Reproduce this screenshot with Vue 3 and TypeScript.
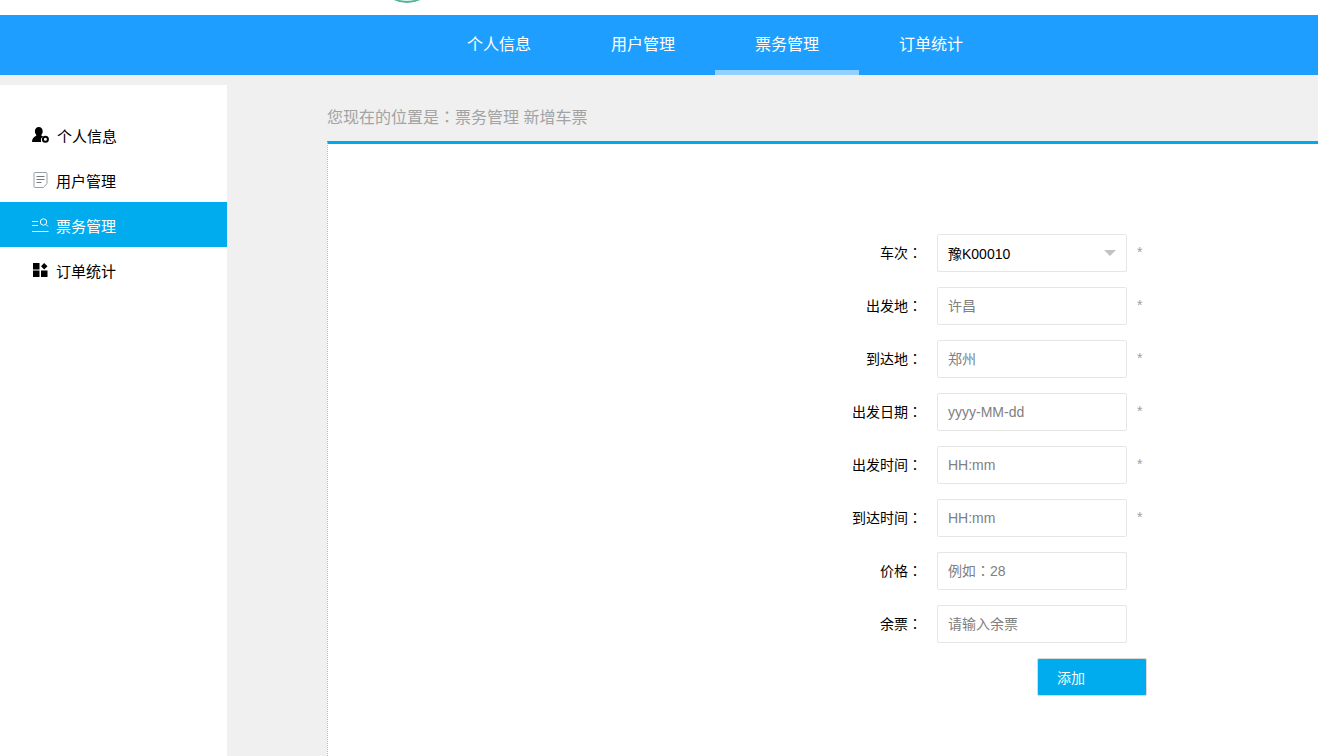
<script setup lang="ts">
interface Field { label: string; placeholder: string; required: boolean; centred?: boolean }
const navItems = ['个人信息', '用户管理', '票务管理', '订单统计']
const fields: Field[] = [
  { label: '出发地', placeholder: '许昌', required: true },
  { label: '到达地', placeholder: '郑州', required: true },
  { label: '出发日期', placeholder: 'yyyy-MM-dd', required: true },
  { label: '出发时间', placeholder: 'HH:mm', required: true },
  { label: '到达时间', placeholder: 'HH:mm', required: true },
  { label: '价格', placeholder: '例如：28', required: false, centred: true },
  { label: '余票', placeholder: '请输入余票', required: false },
]
</script>

<template>
  <div class="page">
    <header class="top">
      <span class="logo"></span>
    </header>
    <nav class="nav">
      <a v-for="(n, i) in navItems" :key="n" class="nav-item" :class="{ active: i === 2 }">{{ n }}</a>
    </nav>
    <div class="body">
      <aside class="side">
        <a class="side-item first">
          <svg class="ico" width="17" height="16" viewBox="0 0 17 16">
            <path fill="#000" d="M6.800 0c2.300 0 3.900 1.900 3.900 4.300 0 1.300-.5 2.600-1.300 3.400v1c.6.200 1.200.5 1.700.9a4.600 4.600 0 0 0-1.900 5.400V15H0c0-3.200 1.800-5.200 4.200-6.300v-1C3.400 6.900 2.900 5.600 2.900 4.300 2.900 1.900 4.500 0 6.800 0Z"/>
            <circle cx="13.400" cy="12.300" r="2.500" fill="none" stroke="#000" stroke-width="2"/>
          </svg>
          <span>个人信息</span>
        </a>
        <a class="side-item">
          <svg class="ico" width="15" height="16" viewBox="0 0 15 16">
            <path fill="none" stroke="#9aa0a8" stroke-width="1" d="M2 .5h11a1 1 0 0 1 1 1V11.500L10.500 15.500H2a1 1 0 0 1-1-1V1.500a1 1 0 0 1 1-1Z"/>
            <path fill="none" stroke="#777" d="M3.500 4.500h8M3.500 7.500h8M3.500 10.500h5"/>
          </svg>
          <span>用户管理</span>
        </a>
        <a class="side-item active">
          <svg class="ico" width="17" height="14" viewBox="0 0 17 14">
            <path fill="none" stroke="#fff" d="M0 3.500h6M0 7.500h6M0 13.500h16.500"/>
            <circle cx="11.500" cy="4" r="3.200" fill="none" stroke="#fff"/>
            <path stroke="#fff" d="m14 6.500 2 2"/>
          </svg>
          <span>票务管理</span>
        </a>
        <a class="side-item">
          <svg class="ico" width="15" height="14" viewBox="0 0 15 14">
            <path fill="#000" d="M0 0h6.500v6.500H0zM0 7.500h6.500V14H0zM8 7.500h6.500V14H8z"/>
            <path fill="#000" d="m11.200 0 3.300 3.200-3.300 3.300L8 3.200z"/>
          </svg>
          <span>订单统计</span>
        </a>
      </aside>
      <main class="main">
        <div class="crumb">您现在的位置是<span class="colon">：</span>票务管理 新增车票</div>
        <section class="panel">
          <form class="form" @submit.prevent>
            <div class="row">
              <label class="label">车次<span class="colon">：</span></label>
              <div class="select">
                <span>豫K00010</span>
                <i class="caret"></i>
              </div>
              <span class="star">*</span>
            </div>
            <div v-for="f in fields" :key="f.label" class="row">
              <label class="label">{{ f.label }}<span class="colon">：</span></label>
              <input class="input" :class="{ centred: f.centred }" type="text" :placeholder="f.placeholder" />
              <span v-if="f.required" class="star">*</span>
            </div>
            <div class="actions">
              <button class="btn" type="submit">添加</button>
            </div>
          </form>
        </section>
      </main>
    </div>
  </div>
</template>

<style scoped>
.page {
  height: 756px;
  display: flex;
  flex-direction: column;
  overflow: hidden;
  background: #f0f0f0;
  font-family: "Liberation Sans", "Noto Sans CJK SC", sans-serif;
  font-size: 14px;
  color: #000;
}
.colon {
  font-family: "Liberation Sans", "Noto Sans CJK TC", sans-serif;
}
.top {
  height: 15px;
  background: #fff;
  position: relative;
  overflow: hidden;
}
.logo {
  position: absolute;
  left: 377px;
  top: -57px;
  width: 60px;
  height: 60px;
  box-sizing: border-box;
  border-radius: 50%;
  border: 2px solid #54b59a;
  background: #dff1ec;
}
.nav {
  height: 60px;
  background: #1e9fff;
  display: flex;
  padding-left: 427px;
}
.nav-item {
  width: 144px;
  height: 60px;
  line-height: 60px;
  text-align: center;
  color: #fff;
  font-size: 16px;
  box-sizing: border-box;
}
.nav-item.active {
  border-bottom: 5px solid #92d0ff;
}
.body {
  flex: 1;
  display: flex;
  min-height: 0;
}
.side {
  width: 227px;
  margin-top: 10px;
  padding-top: 27px;
  background: #fff;
  box-sizing: border-box;
}
.side-item {
  height: 45px;
  display: flex;
  align-items: center;
  padding-left: 32px;
  font-size: 15px;
}
.side-item span {
  padding-top: 2px;
}
.side-item .ico {
  flex: none;
  width: 17px;
  margin-right: 7px;
}
.side-item.first .ico { margin-right: 8px; }
.side-item.active {
  background: #00acee;
  color: #fff;
}
.main {
  flex: 1;
  margin-left: 100px;
  display: flex;
  flex-direction: column;
  min-width: 0;
}
.crumb {
  height: 66px;
  line-height: 86px;
  font-size: 16px;
  color: #a3a3a3;
  flex: none;
}
.panel {
  flex: 1;
  background: #fff;
  border-top: 3px solid #00a9ec;
  border-left: 1px dotted #b5b5b5;
  padding: 90px 0 0 499px;
}
.form {
  display: flex;
  flex-direction: column;
  gap: 15px;
}
.row {
  display: flex;
  align-items: flex-start;
  height: 38px;
}
.label {
  width: 110px;
  line-height: 38px;
  padding-right: 15px;
  text-align: right;
  box-sizing: border-box;
  font-size: 14px;
}
.input,
.select {
  width: 190px;
  height: 38px;
  box-sizing: border-box;
  border: 1px solid #e6e6e6;
  border-radius: 2px;
  padding: 0 10px;
  background: #fff;
  font-size: 14px;
  color: #000;
  outline: none;
}
.input {
  font-family: inherit;
}
.input.centred {
  font-family: "Liberation Sans", "Noto Sans CJK TC", sans-serif;
}
.input::placeholder { color: #808080; opacity: 1; }
.select {
  display: flex;
  align-items: center;
  justify-content: space-between;
}
.caret {
  width: 0;
  height: 0;
  border-left: 6px solid transparent;
  border-right: 6px solid transparent;
  border-top: 6px solid #c2c2c2;
}
.star {
  margin-left: 10px;
  color: #a0a0a0;
  font-size: 14px;
  line-height: 36px;
}
.actions {
  padding-left: 210px;
}
.btn {
  display: block;
  width: 110px;
  height: 38px;
  box-sizing: border-box;
  border: 1px solid #d9d9d9;
  border-radius: 2px;
  background: #00acee;
  color: #fff;
  font: inherit;
  text-align: left;
  padding: 0 0 0 19px;
}
</style>
